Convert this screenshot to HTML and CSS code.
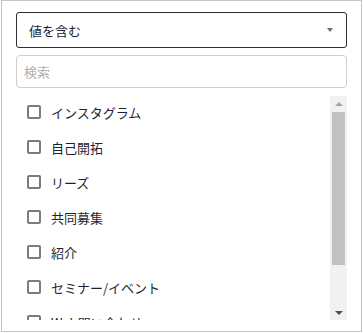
FILE: index.html
```html
<!DOCTYPE html>
<html lang="ja">
<head>
<meta charset="utf-8">
<link rel="stylesheet" href="styles.css">
</head>
<body>
<div class="panel">
  <div class="select">
    <span class="select-text">値を含む</span>
    <span class="caret"></span>
  </div>
  <div class="search"><span class="placeholder">検索</span></div>
  <div class="listbox">
    <div class="list">
      <div class="row"><span class="cb"></span><span class="label">インスタグラム</span></div>
      <div class="row"><span class="cb"></span><span class="label">自己開拓</span></div>
      <div class="row"><span class="cb"></span><span class="label">リーズ</span></div>
      <div class="row"><span class="cb"></span><span class="label">共同募集</span></div>
      <div class="row"><span class="cb"></span><span class="label">紹介</span></div>
      <div class="row"><span class="cb"></span><span class="label">セミナー/イベント</span></div>
      <div class="row"><span class="cb"></span><span class="label">Web問い合わせ</span></div>
      <div class="row"><span class="cb"></span><span class="label">その他</span></div>
    </div>
    <div class="scrollbar">
      <div class="sb-btn"><span class="tri-up"></span></div>
      <div class="sb-track"><div class="sb-thumb"></div></div>
      <div class="sb-btn"><span class="tri-down"></span></div>
    </div>
  </div>
</div>
</body>
</html>
```
FILE: styles.css
```css
html, body {
  margin: 0;
  padding: 0;
  background: #ffffff;
}
body {
  font-family: "Noto Sans CJK JP", "Noto Sans", sans-serif;
  font-size: 13px;
  color: #1f1f2e;
}
.panel {
  margin-left: 1px;
  width: 361px;
  height: 332px;
  box-sizing: border-box;
  border: 1px solid #c4c4c4;
  background: #fff;
  padding: 11px 14px 0 14px;
  display: flex;
  flex-direction: column;
}
.select {
  height: 36px;
  box-sizing: border-box;
  border: 1px solid #2e2e2e;
  border-radius: 3px;
  display: flex;
  align-items: center;
  justify-content: space-between;
  padding: 0 13px 0 12px;
}
.select-text {
  font-size: 13px;
  color: #1c1c30;
  line-height: 1;
}
.caret {
  width: 0;
  height: 0;
  border-left: 3.5px solid transparent;
  border-right: 3.5px solid transparent;
  border-top: 4px solid #6a6a6a;
}
.search {
  margin-top: 7px;
  height: 33px;
  box-sizing: border-box;
  border: 1px solid #cfcfcf;
  border-radius: 4px;
  display: flex;
  align-items: center;
  padding-left: 7px;
}
.placeholder {
  color: #b0b0b0;
  font-size: 13px;
  line-height: 1;
}
.listbox {
  margin-top: 8px;
  height: 224px;
  display: flex;
  overflow: hidden;
}
.list {
  flex: 1;
  overflow: hidden;
  display: flex;
  flex-direction: column;
}
.row {
  flex: none;
  height: 35px;
  box-sizing: border-box;
  padding: 0 0 3px 11px;
  display: flex;
  align-items: center;
  gap: 10px;
}
.cb {
  width: 14px;
  height: 14px;
  box-sizing: border-box;
  border: 2px solid #7b7b7b;
  border-radius: 2px;
  flex: none;
}
.label {
  font-size: 13px;
  line-height: 1;
  color: #1f1f33;
  white-space: nowrap;
}
.scrollbar {
  width: 17px;
  flex: none;
  background: #f1f1f1;
  display: flex;
  flex-direction: column;
}
.sb-btn {
  height: 15px;
  display: flex;
  align-items: center;
  justify-content: center;
}
.tri-up {
  width: 0;
  height: 0;
  border-left: 4px solid transparent;
  border-right: 4px solid transparent;
  border-bottom: 4px solid #a3a3a3;
}
.tri-down {
  width: 0;
  height: 0;
  border-left: 4px solid transparent;
  border-right: 4px solid transparent;
  border-top: 4px solid #505050;
}
.sb-track {
  flex: 1;
  padding: 1px 2px 0 2px;
}
.sb-thumb {
  height: 153px;
  background: #c1c1c1;
}
```
